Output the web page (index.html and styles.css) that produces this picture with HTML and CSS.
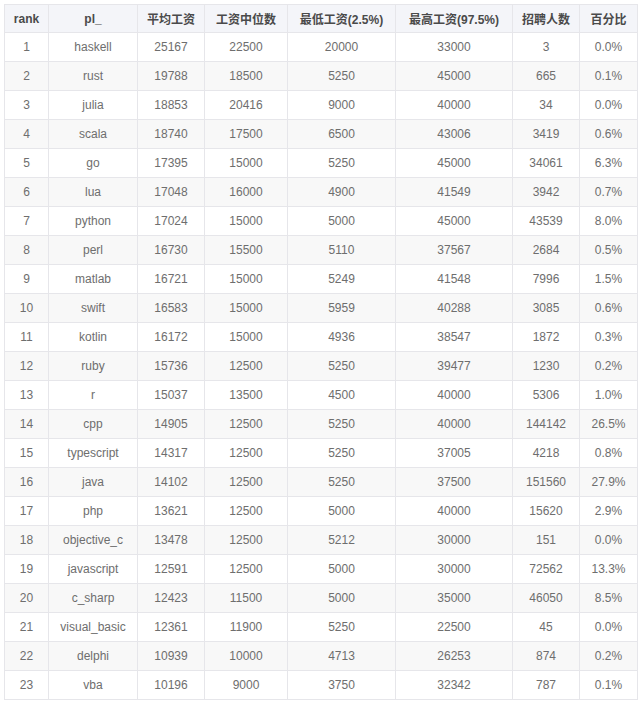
FILE: index.html
```html
<!DOCTYPE html>
<html lang="zh">
<head>
<meta charset="utf-8">
<link rel="stylesheet" href="styles.css">
</head>
<body>
<table class="salary">
<colgroup>
<col class="c1"><col class="c2"><col class="c3"><col class="c4"><col class="c5"><col class="c6"><col class="c7"><col class="c8">
</colgroup>
<thead>
<tr><th>rank</th><th>pl_</th><th>平均工资</th><th>工资中位数</th><th>最低工资(2.5%)</th><th>最高工资(97.5%)</th><th>招聘人数</th><th>百分比</th></tr>
</thead>
<tbody>
<tr><td>1</td><td>haskell</td><td>25167</td><td>22500</td><td>20000</td><td>33000</td><td>3</td><td>0.0%</td></tr>
<tr><td>2</td><td>rust</td><td>19788</td><td>18500</td><td>5250</td><td>45000</td><td>665</td><td>0.1%</td></tr>
<tr><td>3</td><td>julia</td><td>18853</td><td>20416</td><td>9000</td><td>40000</td><td>34</td><td>0.0%</td></tr>
<tr><td>4</td><td>scala</td><td>18740</td><td>17500</td><td>6500</td><td>43006</td><td>3419</td><td>0.6%</td></tr>
<tr><td>5</td><td>go</td><td>17395</td><td>15000</td><td>5250</td><td>45000</td><td>34061</td><td>6.3%</td></tr>
<tr><td>6</td><td>lua</td><td>17048</td><td>16000</td><td>4900</td><td>41549</td><td>3942</td><td>0.7%</td></tr>
<tr><td>7</td><td>python</td><td>17024</td><td>15000</td><td>5000</td><td>45000</td><td>43539</td><td>8.0%</td></tr>
<tr><td>8</td><td>perl</td><td>16730</td><td>15500</td><td>5110</td><td>37567</td><td>2684</td><td>0.5%</td></tr>
<tr><td>9</td><td>matlab</td><td>16721</td><td>15000</td><td>5249</td><td>41548</td><td>7996</td><td>1.5%</td></tr>
<tr><td>10</td><td>swift</td><td>16583</td><td>15000</td><td>5959</td><td>40288</td><td>3085</td><td>0.6%</td></tr>
<tr><td>11</td><td>kotlin</td><td>16172</td><td>15000</td><td>4936</td><td>38547</td><td>1872</td><td>0.3%</td></tr>
<tr><td>12</td><td>ruby</td><td>15736</td><td>12500</td><td>5250</td><td>39477</td><td>1230</td><td>0.2%</td></tr>
<tr><td>13</td><td>r</td><td>15037</td><td>13500</td><td>4500</td><td>40000</td><td>5306</td><td>1.0%</td></tr>
<tr><td>14</td><td>cpp</td><td>14905</td><td>12500</td><td>5250</td><td>40000</td><td>144142</td><td>26.5%</td></tr>
<tr><td>15</td><td>typescript</td><td>14317</td><td>12500</td><td>5250</td><td>37005</td><td>4218</td><td>0.8%</td></tr>
<tr><td>16</td><td>java</td><td>14102</td><td>12500</td><td>5250</td><td>37500</td><td>151560</td><td>27.9%</td></tr>
<tr><td>17</td><td>php</td><td>13621</td><td>12500</td><td>5000</td><td>40000</td><td>15620</td><td>2.9%</td></tr>
<tr><td>18</td><td>objective_c</td><td>13478</td><td>12500</td><td>5212</td><td>30000</td><td>151</td><td>0.0%</td></tr>
<tr><td>19</td><td>javascript</td><td>12591</td><td>12500</td><td>5000</td><td>30000</td><td>72562</td><td>13.3%</td></tr>
<tr><td>20</td><td>c_sharp</td><td>12423</td><td>11500</td><td>5000</td><td>35000</td><td>46050</td><td>8.5%</td></tr>
<tr><td>21</td><td>visual_basic</td><td>12361</td><td>11900</td><td>5250</td><td>22500</td><td>45</td><td>0.0%</td></tr>
<tr><td>22</td><td>delphi</td><td>10939</td><td>10000</td><td>4713</td><td>26253</td><td>874</td><td>0.2%</td></tr>
<tr><td>23</td><td>vba</td><td>10196</td><td>9000</td><td>3750</td><td>32342</td><td>787</td><td>0.1%</td></tr>
</tbody>
</table>
</body>
</html>
```

FILE: styles.css
```css
html, body {
  margin: 0;
  padding: 0;
  background: #ffffff;
}
body {
  padding: 4px;
  font-family: "Liberation Sans", Arial, "Noto Sans CJK SC", sans-serif;
}
.salary {
  border-collapse: collapse;
  table-layout: fixed;
  width: 633px;
  font-size: 12px;
  color: #6e6e6e;
}
.c1 { width: 44px; }
.c2 { width: 89px; }
.c3 { width: 67px; }
.c4 { width: 83px; }
.c5 { width: 108px; }
.c6 { width: 117px; }
.c7 { width: 67px; }
.c8 { width: 58px; }
.salary th,
.salary td {
  border: 1px solid #e6e6ea;
  text-align: center;
  padding: 0;
  white-space: nowrap;
}
.salary th {
  height: 27px;
  background: #f4f5f9;
  color: #4a4a4a;
  font-weight: bold;
}
.salary td {
  height: 28px;
}
.salary tbody tr:nth-child(even) td {
  background: #f8f8f8;
}
```
